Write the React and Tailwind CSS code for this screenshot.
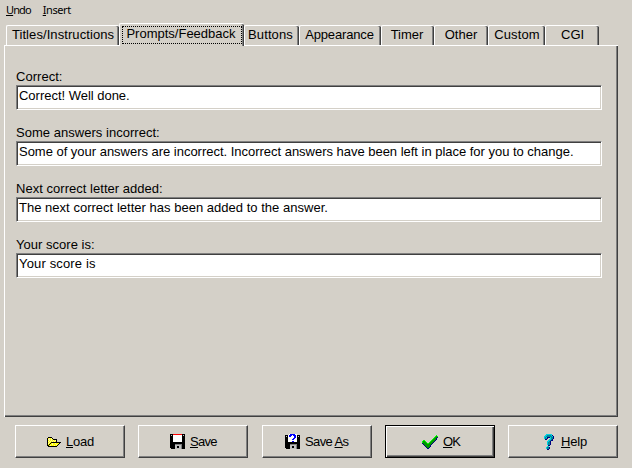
import React from 'react';

const tabs = [
  { label: 'Titles/Instructions', box: 'w-[113px]', track: 'tracking-[0.08px]' },
  { label: 'Prompts/Feedback', box: 'w-[125px]', track: 'tracking-[0px]', active: true },
  { label: 'Buttons', box: 'w-[55px]', track: 'tracking-[0.1px] pr-[3px]' },
  { label: 'Appearance', box: 'w-[82px]', track: 'tracking-[-0.15px] pr-[2px]' },
  { label: 'Timer', box: 'w-[53px]', track: 'tracking-[0px] pr-[2px]' },
  { label: 'Other', box: 'w-[54px]', track: 'tracking-[0px] pr-px' },
  { label: 'Custom', box: 'w-[57px]', track: 'tracking-[0.1px]' },
  { label: 'CGI', box: 'w-[54px]', track: 'tracking-[-0.1px]' },
];

const fields = [
  ['Correct:', 'Correct! Well done.', 'tracking-[-0.02px]'],
  ['Some answers incorrect:', 'Some of your answers are incorrect. Incorrect answers have been left in place for you to change.', 'tracking-[-0.02px]'],
  ['Next correct letter added:', 'The next correct letter has been added to the answer.', 'tracking-[0.02px]'],
  ['Your score is:', 'Your score is', 'tracking-[0.15px]'],
];

const colors = { k: '#000', y: '#ffff00', w: '#fff', r: '#f00', b: '#00f', g: '#c0c0c0', d: '#808080', n: '#000080', l: '#00ff00', e: '#009800', c: '#00d0e0', t: '#008898', o: '#fff7a0' };

function Pixels({ rows }) {
  return (
    <svg width={rows[0].length} height={rows.length} viewBox={`0 0 ${rows[0].length} ${rows.length}`} shapeRendering="crispEdges" className="shrink-0">
      {rows.flatMap((row, y) => [...row].map((p, x) => colors[p] && <rect key={`${x}-${y}`} x={x} y={y} width="1" height="1" fill={colors[p]} />))}
    </svg>
  );
}

const folder = [
  '.kkkk.........',
  'kyoyok........',
  'kooyoykkkk....',
  'kyoyoyoyok....',
  'koyoyoyoyk....',
  'kyoykkkkkkkkkk',
  'koykyoyyoyyyk.',
  'kykyyoyyyoyk..',
  'kkyoyyyoyyk...',
  '.kkkkkkkkk....',
];
const disk = [
  'kkkrrrrrrrrrkkk',
  'kgkwwwwwwwwwkgk',
  'kkkwwwwwwwwwkkk',
  'kkkwwwwwwwwwkkk',
  'kkkwwwwwwwwwkkk',
  'kkkwwwwwwwwwkkk',
  'kkkwwwwwwwwwkkk',
  'kkkwwwwwwwwwkkk',
  'kkkkkkkkkkkkkkk',
  'kkkkkkkkkkkkkkk',
  'kkkkkdddddddkkk',
  'kkkkkggggggdkkk',
  'kkkkkggkkggdkkk',
  'kkkkkggkkggdkkk',
  '.kkkkggggggdkkk',
];
const diskAs = [
  '....wbbbbbww...',
  'kkkwbbbwbbbwkkk',
  'kgkwbbwwwbbwkgk',
  'kkkwwwwwwbbwkkk',
  'kkkwwwwwbbwwkkk',
  'kkkwwwwbbwwwkkk',
  'kkkwwwwwwwwwkkk',
  'kkkwwwwbbwwwkkk',
  'kkkkkkkkkkkkkkk',
  'kkkkkkkkkkkkkkk',
  'kkkkkdddddddkkk',
  'kkkkkggggggdkkk',
  'kkkkkggkkggdkkk',
  'kkkkkggkkggdkkk',
  '.kkkkggggggdkkk',
];
const check = [
  '..............l.',
  '.............lel',
  '............leen',
  '...........leen.',
  '..........leeen.',
  '.ll......leeen..',
  'leel....leeen...',
  'leeel..leeen....',
  'neeeelleeen.....',
  '.neeeeeeen......',
  '..neeeeen.......',
  '...neeeen.......',
  '....neen........',
  '.....nn.........',
];
const question = [
  '...cccccc..',
  '..ccttttcn.',
  '.ccttttttcn',
  '.ctcnnncttn',
  '.cttn..cttn',
  '..nn..cctn.',
  '.....cctnn.',
  '....cctn...',
  '....cttn...',
  '....cttn...',
  '....cttn...',
  '.....nn....',
  '....cc.....',
  '...cttn....',
  '...cttn....',
  '....nn.....',
];

const buttons = [
  { icon: folder, k: 'L', rest: 'oad', pad: 'pl-[31px] gap-[5px] tracking-[-0.2px]' },
  { icon: disk, k: 'S', rest: 'ave', pad: 'pl-[31px] gap-[5px] tracking-[-0.7px]' },
  { icon: diskAs, pre: 'Save ', k: 'A', rest: 's', pad: 'ml-px pl-[22px] gap-[5px] tracking-[-0.6px]' },
  { icon: check, k: 'O', rest: 'K', pad: 'pl-[36px] gap-[5px] tracking-[-0.9px]', primary: true },
  { icon: question, k: 'H', rest: 'elp', pad: 'pl-[34px] gap-[7px] tracking-[-0.2px]' },
];

function Tab({ label, box, track, active }) {
  return (
    <div className={`${box} ${track} relative flex shrink-0 justify-center rounded-t-[2px] border-t border-l border-white bg-[#d4d0c8] shadow-[inset_-1px_0_#404040,inset_-2px_0_#808080] ${active ? 'z-10 -mb-px h-[23px] pt-[2px]' : 'h-[20px]'}`}>
      <span className={active ? 'flex h-[18px] w-[120px] justify-center border border-dotted border-black pr-[2px] leading-[14px]' : 'leading-[17px]'}>{label}</span>
    </div>
  );
}

export default function App() {
  return (
    <div className="flex h-[468px] w-[632px] flex-col overflow-hidden bg-[#d4d0c8] font-['Liberation_Sans',Arial,sans-serif] text-[13px] leading-[15px] whitespace-nowrap text-black">
      <nav className="flex h-[23px] gap-[12px] pt-[2px] pl-[6px] font-['Noto_Sans',sans-serif] text-[11px] tracking-[-0.4px]">
        <span className="tracking-[-0.9px]"><u>U</u>ndo</span>
        <span><u>I</u>nsert</span>
      </nav>
      <div className="flex h-[22px] items-end pl-[6px]">
        {tabs.map((t) => <Tab key={t.label} {...t} />)}
      </div>
      <main className="ml-[4px] flex h-[372px] w-[614px] flex-col gap-[15px] border-t border-l border-white pt-[23px] pl-[11px] shadow-[inset_-1px_-1px_#404040,inset_-2px_-2px_#808080]">
        {fields.map(([label, value, track]) => (
          <label key={label} className="flex h-[41px] flex-col">
            <span className="h-[16px] tracking-[0.03px]">{label}</span>
            <span className={`h-[25px] w-[586px] border border-t-[#808080] border-r-white border-b-white border-l-[#808080] bg-white pt-[2px] pl-[2px] shadow-[inset_1px_1px_#404040,inset_-1px_-1px_#d4d0c8] ${track}`}>{value}</span>
          </label>
        ))}
      </main>
      <footer className="mt-[8px] ml-[15px] flex h-[33px] gap-[13px]">
        {buttons.map((b) => (
          <button key={b.rest} className={`flex h-[33px] w-[110px] items-center border ${b.pad} ${b.primary ? 'border-black shadow-[inset_1px_1px_#fff,inset_-1px_-1px_#404040,inset_-2px_-2px_#808080]' : 'border-t-white border-r-[#404040] border-b-[#404040] border-l-white shadow-[inset_-1px_-1px_#808080]'}`}>
            <Pixels rows={b.icon} />
            <span>{b.pre}<u>{b.k}</u>{b.rest}</span>
          </button>
        ))}
      </footer>
    </div>
  );
}
